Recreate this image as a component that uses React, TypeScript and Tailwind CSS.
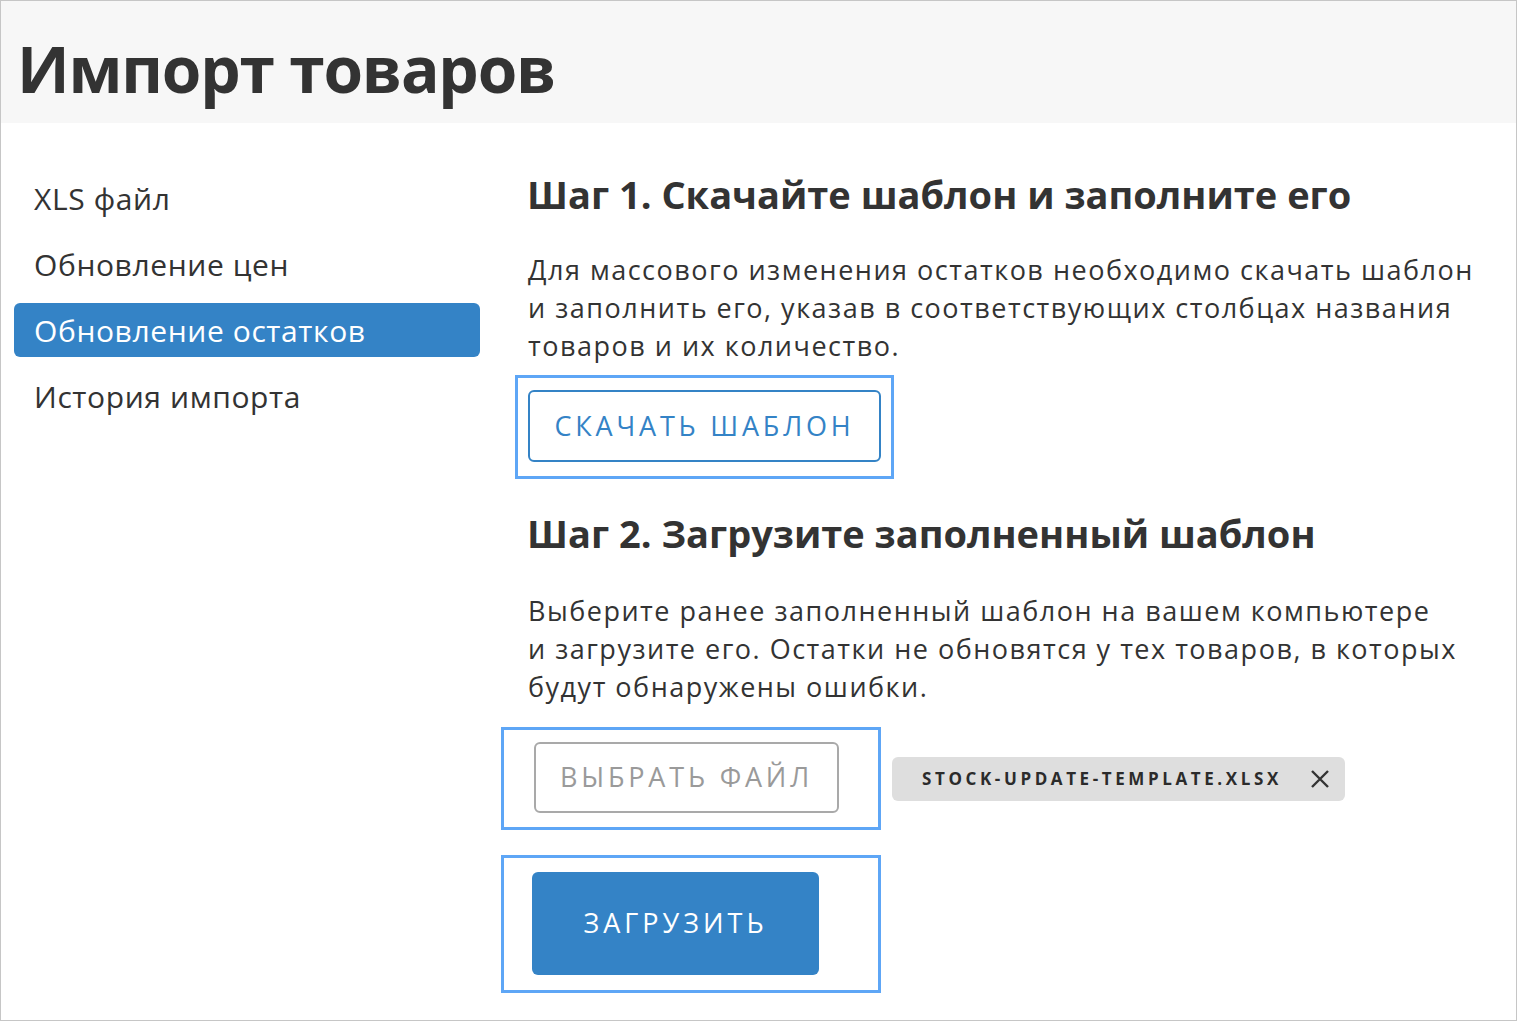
import React from 'react';

const navItems = ['XLS файл', 'Обновление цен', 'Обновление остатков', 'История импорта'];

const App: React.FC = () => {
  const active = 2;

  return (
    <div className="w-[1517px] h-[1021px] border border-[#c6c6c6] bg-white text-[#333333] font-['Open_Sans',sans-serif] overflow-hidden">
      {/* Header */}
      <header className="h-[122px] bg-[#f7f7f7] flex items-center pl-[16px]">
        <h1 className="text-[64px] font-bold leading-none tracking-[-1.2px] pt-[14px]">Импорт товаров</h1>
      </header>

      <div className="flex">
        {/* Sidebar */}
        <nav className="w-[514px] shrink-0 pl-[13px] pt-[48px] flex flex-col gap-[12px]">
          {navItems.map((item, idx) => (
            <div
              key={item}
              className={
                idx === active
                  ? 'w-[466px] h-[54px] flex items-center pl-[20px] rounded-[6px] bg-[#3483c6] text-white text-[30px] tracking-[0.6px]'
                  : 'w-[466px] h-[54px] flex items-center pl-[20px] text-[30px] tracking-[0.6px]'
              }
            >
              {item}
            </div>
          ))}
        </nav>

        {/* Main */}
        <main className="flex-1 pt-[46px]">
          <h2 className="text-[38px] font-bold leading-[50px] ml-[12px]">
            Шаг 1. Скачайте шаблон и заполните его
          </h2>
          <p className="mt-[32px] ml-[13px] text-[27px] leading-[38px] tracking-[1.5px] whitespace-nowrap">
            Для массового изменения остатков необходимо скачать шаблон
            <br />
            и заполнить его, указав в соответствующих столбцах названия
            <br />
            товаров и их количество.
          </p>

          <div className="mt-[10px] w-[379px] border-[3px] border-[#5ea6f6] pt-[12px] pb-[14px] px-[10px]">
            <button className="w-[353px] h-[72px] border-2 border-[#3483c6] rounded-[6px] text-[#3483c6] text-[27px] tracking-[3.8px]">
              СКАЧАТЬ ШАБЛОН
            </button>
          </div>

          <h2 className="mt-[29px] ml-[12px] text-[38px] font-bold leading-[50px]">
            Шаг 2. Загрузите заполненный шаблон
          </h2>
          <p className="mt-[34px] ml-[13px] text-[27px] leading-[38px] tracking-[1.5px] whitespace-nowrap">
            Выберите ранее заполненный шаблон на вашем компьютере
            <br />
            и загрузите его. Остатки не обновятся у тех товаров, в которых
            <br />
            будут обнаружены ошибки.
          </p>

          <div className="mt-[21px] -ml-[14px] flex items-center gap-[11px]">
            <div className="w-[380px] h-[103px] border-[3px] border-[#5ea6f6] pl-[30px] pt-[12px]">
              <button className="w-[305px] h-[71px] border-2 border-[#a9a9a9] rounded-[6px] text-[#9a9a9a] text-[27px] tracking-[3.8px]">
                ВЫБРАТЬ ФАЙЛ
              </button>
            </div>
            <div className="h-[44px] w-[453px] rounded-[6px] bg-[#dedede] flex items-center pl-[30px] pr-[14px] justify-between">
              <span className="text-[17px] font-bold tracking-[3.6px] text-[#2b2b2b]">STOCK-UPDATE-TEMPLATE.XLSX</span>
              <svg width="22" height="22" viewBox="0 0 22 22">
                <path d="M3 3 L19 19 M19 3 L3 19" stroke="#333" strokeWidth="2.4" fill="none" />
              </svg>
            </div>
          </div>

          <div className="mt-[25px] -ml-[14px] w-[380px] h-[138px] border-[3px] border-[#5ea6f6] pl-[28px] pt-[14px]">
            <button className="w-[287px] h-[103px] rounded-[6px] bg-[#3483c6] text-white text-[27px] tracking-[4px]">
              ЗАГРУЗИТЬ
            </button>
          </div>
        </main>
      </div>
    </div>
  );
};

export default App;
